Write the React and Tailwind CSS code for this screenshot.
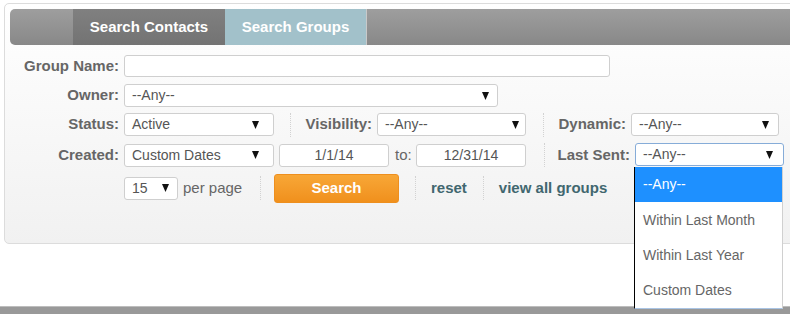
import React from 'react';

const Arrow = () => (
  <svg width="7" height="8" viewBox="0 0 7 8" className="shrink-0">
    <polygon points="0,0 7,0 3.5,8" fill="#111" />
  </svg>
);

function Select({ value, w, pr = 8, focused = false }) {
  return (
    <div
      className={`flex h-[23px] items-center justify-between rounded-[3px] border bg-white pl-[7px] text-[14px] text-[#555] ${
        focused ? 'border-[#86acd8]' : 'border-[#cfcfcf]'
      }`}
      style={{ width: w, paddingRight: pr }}
    >
      <span>{value}</span>
      <Arrow />
    </div>
  );
}

const Dots = () => <div className="h-[24px] border-l border-dotted border-[#d2d2d2]" />;

function Label({ children, w }) {
  return (
    <div
      className="shrink-0 pr-[5px] text-right text-[15px] font-bold text-[#666]"
      style={{ width: w }}
    >
      {children}
    </div>
  );
}

function SepLabel({ w, dot, children }) {
  return (
    <div className="flex shrink-0 items-center" style={{ width: w }}>
      <div style={{ marginLeft: dot }}>
        <Dots />
      </div>
      <div className="flex-1 pr-[5px] text-right text-[15px] font-bold text-[#666]">{children}</div>
    </div>
  );
}

export default function App() {
  const options = [
    ['--Any--', 'h-[35px]'],
    ['Within Last Month', 'h-[36px]'],
    ['Within Last Year', 'h-[35px]'],
    ['Custom Dates', 'h-[35px]'],
  ];

  return (
    <div
      className="relative h-[314px] w-[790px] overflow-hidden bg-white"
      style={{ fontFamily: '"Liberation Sans", Arial, sans-serif' }}
    >
      <div className="ml-[4px] mt-[3px] h-[241px] w-[820px] rounded-[5px] border border-[#dcdcdc] bg-gradient-to-b from-white to-[#f1f1f1] p-[5px]">
        {/* tabs */}
        <div className="flex h-[36px] rounded-l-[5px] bg-gradient-to-b from-[#9e9e9e] to-[#888]">
          <div className="w-[63px]" />
          <div className="flex w-[152px] items-center justify-center bg-gradient-to-b from-[#808080] to-[#737373] text-[15px] font-bold text-white">
            Search Contacts
          </div>
          <div className="flex w-[141px] items-center justify-center bg-[#a2c1ca] text-[15px] font-bold text-white">
            Search Groups
          </div>
          <div className="w-px bg-[#c9c9c9]" />
        </div>

        {/* row 1 */}
        <div className="mt-[10px] flex h-[22px] items-center">
          <Label w={114}>Group Name:</Label>
          <div className="h-[22px] w-[486px] rounded-[3px] border border-[#cfcfcf] bg-white" />
        </div>

        {/* row 2 */}
        <div className="mt-[7px] flex h-[23px] items-center">
          <Label w={114}>Owner:</Label>
          <Select value="--Any--" w={374} />
        </div>

        {/* row 3 */}
        <div className="mt-[6px] flex h-[23px] items-center">
          <Label w={114}>Status:</Label>
          <Select value="Active" w={150} pr={14} />
          <SepLabel w={103} dot={16}>Visibility:</SepLabel>
          <Select value="--Any--" w={149} pr={6} />
          <SepLabel w={105} dot={17}>Dynamic:</SepLabel>
          <Select value="--Any--" w={148} pr={9} />
        </div>

        {/* row 4 */}
        <div className="mt-[7px] flex h-[24px] items-center">
          <Label w={114}>Created:</Label>
          <Select value="Custom Dates" w={150} pr={14} />
          <div className="ml-[5px] flex h-[23px] w-[110px] items-center justify-center rounded-[3px] border border-[#cfcfcf] bg-white text-[14px] text-[#555]">
            1/1/14
          </div>
          <div className="w-[27px] pl-[6px] text-[15px] text-[#666]">to:</div>
          <div className="flex h-[23px] w-[110px] items-center justify-center rounded-[3px] border border-[#cfcfcf] bg-white text-[14px] text-[#555]">
            12/31/14
          </div>
          <SepLabel w={109} dot={18}>Last Sent:</SepLabel>
          <div className="h-[24px]">
            <Select value="--Any--" w={149} pr={10} focused />
          </div>
        </div>

        {/* row 5 */}
        <div className="mt-[6px] flex h-[30px] items-center">
          <div className="w-[114px]" />
          <Select value="15" w={54} />
          <div className="ml-[5px] w-[77px] text-[15px] text-[#666]">per page</div>
          <Dots />
          <button className="ml-[13px] h-[29px] w-[125px] rounded-[3px] border border-[#ee8f1e] bg-gradient-to-b from-[#f8a736] to-[#f0901c] text-[15px] font-bold text-white">
            Search
          </button>
          <div className="ml-[16px]">
            <Dots />
          </div>
          <a className="ml-[15px] text-[15px] font-bold text-[#41676f]">reset</a>
          <div className="ml-[16px]">
            <Dots />
          </div>
          <a className="ml-[15px] text-[15px] font-bold text-[#41676f]">view all groups</a>
        </div>
      </div>

      {/* footer bar */}
      <div className="mt-[62px] h-[8px] border-t border-[#bdbdbd] bg-[#999]" />

      {/* open dropdown */}
      <div className="absolute left-[634px] top-[167px] z-10 w-[149px] border-b border-l border-r border-b-[#a9c4e4] border-l-black border-r-[#d0d0d0] bg-white">
        {options.map(([o, h], i) => (
          <div
            key={o}
            className={`flex items-center pl-[8px] text-[14px] ${h} ${
              i === 0 ? 'bg-[#1e90ff] text-white' : 'text-[#666]'
            }`}
          >
            {o}
          </div>
        ))}
      </div>
    </div>
  );
}
